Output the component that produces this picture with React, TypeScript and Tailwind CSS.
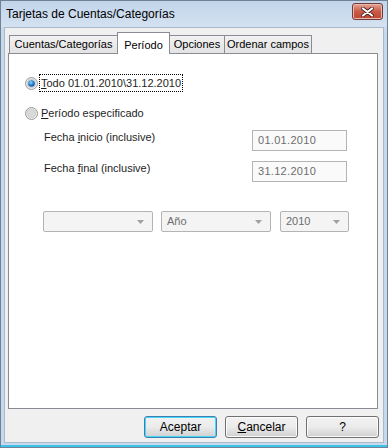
import React from "react";

const font = { fontFamily: '"Liberation Sans", Arial, sans-serif' };

function Radio({ checked }: { checked?: boolean }) {
  return (
    <svg width="13" height="13" viewBox="0 0 13 13" className="shrink-0">
      <defs>
        <linearGradient id={checked ? "rg1" : "rg0"} x1="0" y1="0" x2="1" y2="1">
          <stop offset="0" stopColor="#e8e8e8" />
          <stop offset="1" stopColor="#f8f8f8" />
        </linearGradient>
        <radialGradient id="dot" cx="0.4" cy="0.35" r="0.7">
          <stop offset="0" stopColor="#9fd6f8" />
          <stop offset="0.5" stopColor="#2a8ad4" />
          <stop offset="1" stopColor="#0c4d94" />
        </radialGradient>
      </defs>
      <circle cx="6.5" cy="6.5" r="6" fill={`url(#${checked ? "rg1" : "rg0"})`} stroke="#9a9a9a" strokeWidth="1" />
      <circle cx="6.5" cy="6.5" r="4.5" fill="#d9d9d9" stroke="#c4c4c4" strokeWidth="0.6" />
      {checked && <circle cx="6.5" cy="6.5" r="3.3" fill="url(#dot)" />}
    </svg>
  );
}

function Arrow() {
  return (
    <svg width="7" height="4" viewBox="0 0 7 4">
      <path d="M0 0 L7 0 L3.5 4 Z" fill="#a0a0a0" />
    </svg>
  );
}

function Combo({ w, text }: { w: string; text?: string }) {
  return (
    <div className={`${w} h-[21px] border border-[#b4b4b4] rounded-[2px] bg-[#f4f4f4] flex items-center pl-[5px] pr-[8px]`}>
      <span className="flex-1 text-[11px] text-[#6d6d6d]">{text}</span>
      <Arrow />
    </div>
  );
}

function Input({ text }: { text: string }) {
  return (
    <div className="w-[95px] h-[21px] border border-[#b4b4b4] bg-[#fafafa] flex items-center pl-[5px] text-[11px] text-[#6d6d6d] tracking-[0.3px]">
      {text}
    </div>
  );
}

function Tab({ label, active, w }: { label: string; active?: boolean; w: string }) {
  if (active) {
    return (
      <div className={`${w} h-[22px] bg-white border border-b-0 border-[#898c95] -mb-px z-10 flex items-start justify-center pt-[4px] text-[11px] text-black whitespace-nowrap`}>
        {label}
      </div>
    );
  }
  return (
    <div className={`${w} h-[18px] bg-gradient-to-b from-[#f2f2f2] to-[#e3e3e3] border border-b-0 border-[#898c95] flex items-center justify-center text-[11px] text-black whitespace-nowrap`}>
      {label}
    </div>
  );
}

function Button({ children, def }: { children: React.ReactNode; def?: boolean }) {
  return (
    <div
      className={`w-[73px] h-[22px] rounded-[3px] border ${
        def ? "border-[#3c7fb1] shadow-[inset_0_0_0_1px_#48d7fb]" : "border-[#707070] shadow-[inset_0_0_0_1px_#fbfbfb]"
      } bg-gradient-to-b from-[#f2f2f2] via-[#ebebeb] to-[#cfcfcf] flex items-center justify-center text-[12px] text-black`}
    >
      {children}
    </div>
  );
}

export default function App() {
  return (
    <div className="w-[388px] h-[448px] flex flex-col bg-[#c7d9ec] border border-[#6f8296] overflow-hidden" style={font}>
      {/* title bar */}
      <div className="h-[26px] shrink-0 flex items-center pl-[5px] pr-[4px] bg-gradient-to-b from-[#c2d5ea] to-[#d4e2f1]">
        <span className="flex-1 text-[12px] text-black">Tarjetas de Cuentas/Categorías</span>
        <div className="w-[31px] h-[17px] -mt-[5px] rounded-[3px] border border-[#6e3a3a] bg-gradient-to-b from-[#e8a493] via-[#c75a48] to-[#c4442f] flex items-center justify-center shadow-[inset_0_0_0_1px_#eab9ad]">
          <svg width="13" height="10" viewBox="0 0 13 10">
            <path d="M2 1.5 L11 8.5 M11 1.5 L2 8.5" stroke="#3a1a1a" strokeWidth="3.6" strokeLinecap="round" />
            <path d="M2 1.5 L11 8.5 M11 1.5 L2 8.5" stroke="#ffffff" strokeWidth="2.2" strokeLinecap="round" />
          </svg>
        </div>
      </div>
      {/* client */}
      <div className="flex-1 ml-[3px] mr-[3px] mb-[2px] bg-[#f0f0f0] border border-[#a9b9ca] flex flex-col pl-[3px] pr-[5px]">
        <div className="flex items-end mt-[3px] h-[22px] pl-[1px]">
          <Tab label="Cuentas/Categorías" w="w-[109px]" />
          <Tab label="Período" active w="w-[53px] -ml-px" />
          <Tab label="Opciones" w="w-[56px] -ml-px" />
          <Tab label="Ordenar campos" w="w-[88px] -ml-px" />
        </div>
        <div className="h-[356px] bg-white border border-[#898c95] flex flex-col text-[11px] text-[#1e1e1e]">
          <div className="flex items-center mt-[20px] ml-[16px] h-[18px]">
            <Radio checked />
            <span className="ml-[1px] px-[1px] h-[18px] flex items-center border border-dotted border-black">
              <span><u>T</u>odo 01.01.2010\31.12.2010</span>
            </span>
          </div>
          <div className="flex items-center mt-[12px] ml-[16px] h-[18px]">
            <Radio />
            <span className="ml-[3px]"><u>P</u>eríodo especificado</span>
          </div>
          <div className="flex items-center mt-[8px] ml-[35px] mr-[30px] justify-between">
            <span className="-mt-[6px]">Fecha <u>i</u>nicio (inclusive)</span>
            <Input text="01.01.2010" />
          </div>
          <div className="flex items-center mt-[10px] ml-[35px] mr-[30px] justify-between">
            <span className="-mt-[6px]">Fecha <u>f</u>inal (inclusive)</span>
            <Input text="31.12.2010" />
          </div>
          <div className="flex items-center mt-[29px] ml-[34px] gap-[8px]">
            <Combo w="w-[110px]" />
            <Combo w="w-[110px]" text="Año" />
            <Combo w="w-[69px] ml-[1px]" text="2010" />
          </div>
        </div>
        <div className="flex justify-end gap-[8px] mt-[7px] -mr-[1px]">
          <Button def>Aceptar</Button>
          <Button><span><u>C</u>ancelar</span></Button>
          <Button>?</Button>
        </div>
      </div>
      <div className="h-[2px] shrink-0 bg-[#3ec3ea]" />
    </div>
  );
}
